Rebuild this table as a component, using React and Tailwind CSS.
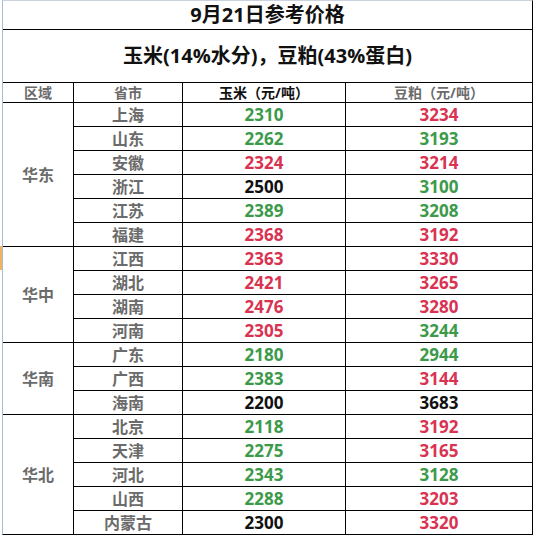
import React from "react";

const G = "text-[#3c9a4a]";
const R = "text-[#d93352]";
const K = "text-[#111111]";

const regions = [
  {
    name: "华东",
    span: "row-span-6",
    rows: [
      ["上海", "2310", G, "3234", R],
      ["山东", "2262", G, "3193", G],
      ["安徽", "2324", R, "3214", R],
      ["浙江", "2500", K, "3100", G],
      ["江苏", "2389", G, "3208", G],
      ["福建", "2368", R, "3192", R],
    ],
  },
  {
    name: "华中",
    span: "row-span-4",
    rows: [
      ["江西", "2363", R, "3330", R],
      ["湖北", "2421", R, "3265", R],
      ["湖南", "2476", R, "3280", R],
      ["河南", "2305", R, "3244", G],
    ],
  },
  {
    name: "华南",
    span: "row-span-3",
    rows: [
      ["广东", "2180", G, "2944", G],
      ["广西", "2383", G, "3144", R],
      ["海南", "2200", K, "3683", K],
    ],
  },
  {
    name: "华北",
    span: "row-span-5",
    rows: [
      ["北京", "2118", G, "3192", R],
      ["天津", "2275", G, "3165", R],
      ["河北", "2343", G, "3128", G],
      ["山西", "2288", G, "3203", R],
      ["内蒙古", "2300", K, "3320", R],
    ],
  },
];

export default function App() {
  return (
    <div className="relative w-[536px] h-[537px] bg-white font-['Open_Sans','Noto_Sans_CJK_SC',sans-serif] font-bold overflow-hidden">
      {/* Excel row-header selection mark */}
      <div className="absolute left-0 top-[246px] w-[2px] h-[24px] bg-[#f3b35a]" />

      <div className="ml-[2px] w-[531px] border-l border-t border-l-[#a9bad4] border-t-[#c9d2de] border-r border-b border-r-black border-b-black grid grid-cols-[70px_108px_162px_186px] grid-rows-[28px_52px_19px_repeat(18,23px)] gap-px bg-black">
        <div className="col-span-4 bg-white flex items-center justify-center text-[20px] text-[#111] leading-none">
          9月21日参考价格
        </div>
        <div className="col-span-4 bg-white flex items-center justify-center text-[20px] text-[#111] leading-none">
          玉米(14%水分)，豆粕(43%蛋白)
        </div>

        <div className="bg-white flex items-center justify-center text-[14px] text-[#6b6b6b] leading-none">区域</div>
        <div className="bg-white flex items-center justify-center text-[14px] text-[#6b6b6b] leading-none">省市</div>
        <div className="bg-white flex items-center justify-center text-[14px] text-[#111] leading-none">玉米（元/吨）</div>
        <div className="bg-white flex items-center justify-center text-[14px] text-[#6b6b6b] leading-none">豆粕（元/吨）</div>

        {regions.map((reg) =>
          reg.rows.map((r, i) => (
            <React.Fragment key={reg.name + r[0]}>
              {i === 0 && (
                <div className={`${reg.span} bg-white flex items-center justify-center text-[16px] text-[#6b6b6b] leading-none`}>
                  {reg.name}
                </div>
              )}
              <div className="bg-white flex items-center justify-center text-[16px] text-[#6b6b6b] leading-none">
                {r[0]}
              </div>
              <div className={`bg-white flex items-center justify-center text-[17px] leading-none ${r[2]}`}>
                {r[1]}
              </div>
              <div className={`bg-white flex items-center justify-center text-[17px] leading-none ${r[4]}`}>
                {r[3]}
              </div>
            </React.Fragment>
          ))
        )}
      </div>
    </div>
  );
}
